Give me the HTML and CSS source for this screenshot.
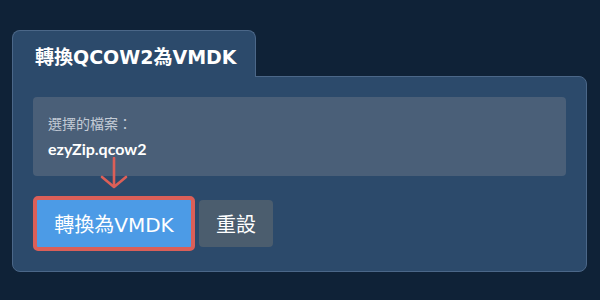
FILE: index.html
```html
<!DOCTYPE html>
<html lang="zh-Hant">
<head>
    <meta charset="UTF-8">
    <meta name="viewport" content="width=device-width, initial-scale=1.0">
    <title>轉換QCOW2為VMDK</title>
    <link rel="stylesheet" href="styles.css">
</head>
<body>
    <div id="container">
        <div class="tab">
            <h1 class="title">轉換QCOW2為VMDK</h1>
        </div>
        <div class="panel">
            <div class="fileBox">
                <p class="fileLabel">選擇的檔案：</p>
                <p class="fileName">ezyZip.qcow2</p>
            </div>
            <div class="actions">
                <!-- annotation arrow pointing at the convert button -->
                <svg class="arrow" width="30" height="32" viewBox="0 0 30 32">
                    <path d="M15 1 V29 M3 20 L15 30 L27 20" fill="none" stroke="#dc5f57" stroke-width="2.6" stroke-linecap="round" stroke-linejoin="round"/>
                </svg>
                <button class="btn convert">轉換為VMDK</button>
                <button class="btn reset">重設</button>
            </div>
        </div>
    </div>
</body>
</html>
```

FILE: styles.css
```css
body {
    margin: 0;
    background-color: #0f2237;
    font-family: Lato, "Noto Sans CJK TC", sans-serif;
}
#container {
    padding: 30px 13px 0 12px;
}
.tab {
    position: relative;
    z-index: 1;
    width: 220px;
    height: 46px;
    margin-bottom: -1px;
    padding-left: 22px;
    background-color: #2c4a6b;
    border: 1px solid #4b6788;
    border-bottom: none;
    border-radius: 8px 8px 0 0;
}
.title {
    margin: 0;
    padding-top: 11px;
    font-family: "DejaVu Sans", "Noto Sans CJK TC", sans-serif;
    font-size: 19px;
    font-weight: bold;
    color: #ffffff;
}
.panel {
    height: 154px;
    padding: 20px;
    background-color: #2c4a6b;
    border: 1px solid #4b6788;
    border-radius: 0 8px 8px 8px;
}
.fileBox {
    height: 79px;
    box-sizing: border-box;
    padding: 16px 15px;
    background-color: #4a5f78;
    border-radius: 4px;
}
.fileBox p {
    margin: 0;
}
.fileLabel {
    font-size: 14px;
    color: #c3cbd6;
}
.fileName {
    margin-top: 6px !important;
    font-size: 16px;
    font-weight: bold;
    color: #ffffff;
}
.actions {
    position: relative;
    display: flex;
    align-items: flex-start;
    gap: 4px;
    margin-top: 20px;
}
.arrow {
    position: absolute;
    left: 66px;
    top: -39px;
}
.btn {
    height: 47px;
    padding: 0 16px;
    font-family: "DejaVu Sans", "Noto Sans CJK TC", sans-serif;
    font-size: 20px;
    color: #ffffff;
    border: none;
    border-radius: 4px;
    cursor: pointer;
}
.convert {
    box-sizing: content-box;
    width: 122px;
    background-color: #4c9be6;
    border: 4px solid #db5f58;
    border-radius: 5px;
}
.reset {
    width: 74px;
    margin-top: 4px;
    padding: 0;
    background-color: #4b5d6e;
}
```
